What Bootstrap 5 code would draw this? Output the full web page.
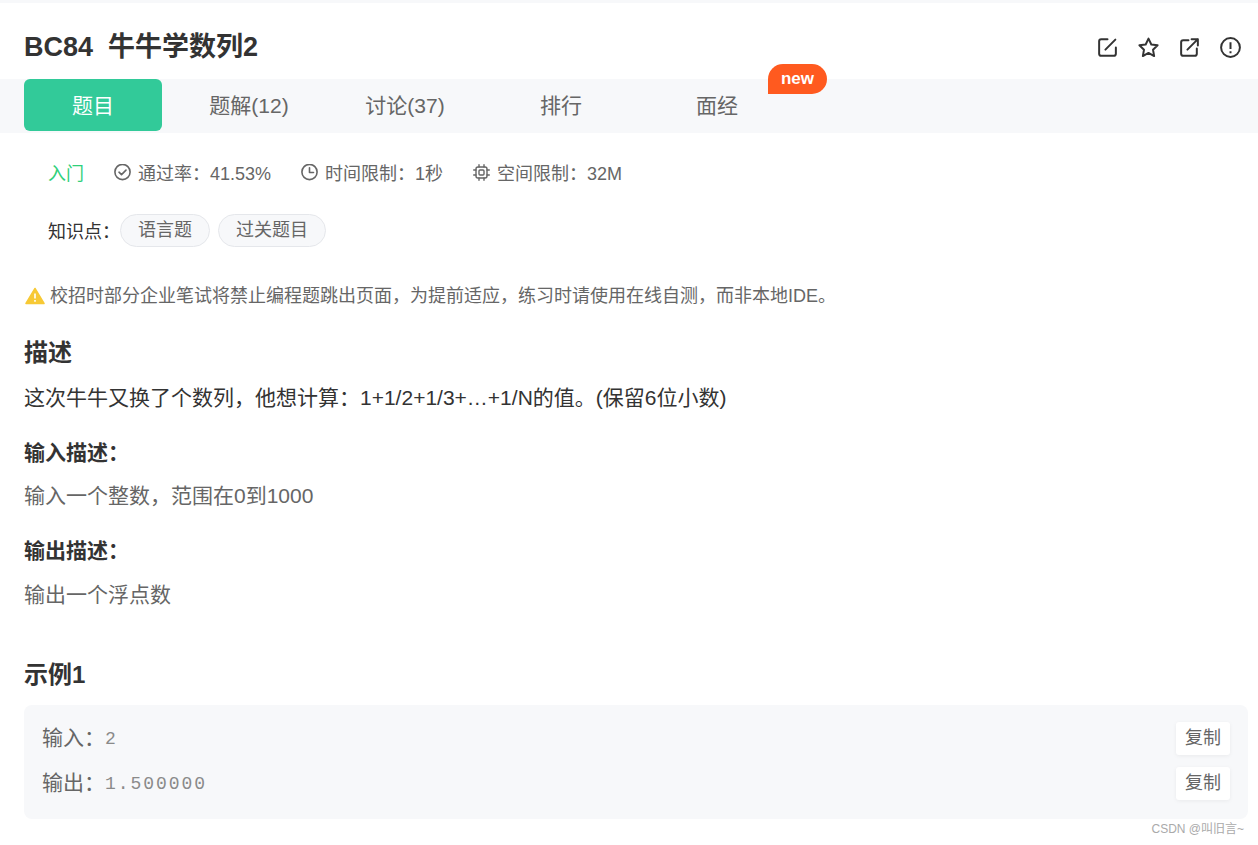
<!DOCTYPE html>
<html lang="zh">
<head>
<meta charset="utf-8">
<link rel="stylesheet" href="https://cdn.jsdelivr.net/npm/bootstrap@5.3.0/dist/css/bootstrap.min.css">
<style>
html,body{height:845px;overflow:hidden}
body{font-family:"Liberation Sans","Noto Sans CJK SC",sans-serif;color:#333;background:#fff;border-top:3px solid #f7f8fa}
.head-row{height:76px;padding:12px 16px 0 24px}
.q-title{font-size:27px;line-height:36px;font-weight:700;margin:0;white-space:pre;color:#333}
.tool-icons{gap:18px}
.tab-strip{height:54px;background:#f7f8fa;padding-left:24px;gap:18px;position:relative}
.tab-item{width:138px;height:52px;line-height:54px;text-align:center;font-size:21px;color:#666;border-radius:6px;position:relative}
.tab-on{background:#32ca99;color:#fff}
.new-flag{position:absolute;left:768px;top:-15px;width:59px;height:30px;background:#ff5a1f;color:#fff;font-size:17px;font-weight:700;line-height:30px;text-align:center;border-radius:16px 16px 16px 0}
.meta-row{height:24px;margin-top:29px;padding-left:48px;font-size:18px;line-height:24px;color:#666}
.lvl{color:#2fd07a;margin-right:30px}
.meta-item{margin-right:30px;gap:7px}
.meta-ico{margin-top:-3px}
.know-row{margin-top:28px;padding-left:48px;height:33px;font-size:18px;color:#333;gap:8px}
.chip{height:33px;line-height:30px;border:1px solid #e5e7eb;background:#f7f8fa;border-radius:17px;color:#666;padding:0 17px}
.know-label{margin-top:5px;margin-right:-8px;width:72px}
.warn-row{margin-top:37px;padding-left:25px;font-size:18px;line-height:24px;color:#666;gap:5px}
.sec-h{font-size:24px;line-height:32px;font-weight:700;color:#333;margin:0;padding-left:24px}
.sec-sub{font-size:21px;line-height:28px;font-weight:700;color:#333;margin:0;padding-left:24px}
.desc-text{font-size:21px;line-height:28px;padding-left:24px;margin:0}
.gray-t{color:#666}
.sec-gap-a{margin-top:29px}.gap-15{margin-top:15px}.gap-16{margin-top:16px}.sec-gap-b{margin-top:27px}.sec-gap-c{margin-top:27px}.sec-gap-d{margin-top:50px}
.sample{margin:14px 10px 0 24px;height:114px;background:#f7f8fa;border-radius:8px;padding:17px 18px 0;position:relative}
.sample-row{height:33px;margin-bottom:12px;font-size:21px;line-height:31px;color:#666}
.mono-v{font-family:"Liberation Mono",monospace;font-size:18px;letter-spacing:1.95px;color:#8a8a8a;position:relative;top:-1px}
.copy-b{width:54px;height:33px;background:#fff;border-radius:3px;font-size:18px;line-height:33px;text-align:center;color:#666;box-shadow:0 1px 4px rgba(0,0,0,.06)}
.wm{position:absolute;right:14px;top:820px;font-size:12px;line-height:18px;color:#aaa}
</style>
</head>
<body>
<div class="head-row d-flex justify-content-between align-items-center">
  <h1 class="q-title">BC84  牛牛学数列2</h1>
  <div class="tool-icons d-flex align-items-center">
    <svg width="23" height="23" viewBox="0 0 22 22" fill="none" stroke="#333" stroke-width="1.900" stroke-linecap="round" stroke-linejoin="round"><path d="M11 3H5a2 2 0 0 0-2 2v12a2 2 0 0 0 2 2h12a2 2 0 0 0 2-2v-6"/><path d="M9 13L18.500 3.500"/></svg>
    <svg width="23" height="23" viewBox="0 0 22 22" fill="none" stroke="#333" stroke-width="1.900" stroke-linejoin="round"><path d="M11 2.500l2.700 5.600 6 .8-4.400 4.200 1.100 6.100-5.400-3-5.400 3 1.100-6.100-4.400-4.200 6-.8z"/></svg>
    <svg width="23" height="23" viewBox="0 0 22 22" fill="none" stroke="#333" stroke-width="1.900" stroke-linecap="round" stroke-linejoin="round"><path d="M10 4H5a2 2 0 0 0-2 2v11a2 2 0 0 0 2 2h11a2 2 0 0 0 2-2v-5"/><path d="M9 13L19 3M13 3h6v6"/></svg>
    <svg width="23" height="23" viewBox="0 0 22 22" fill="none" stroke="#333" stroke-width="1.900"><circle cx="11" cy="11" r="9"/><path d="M11 6v6.500M11 14.500v2"/></svg>
  </div>
</div>
<div class="tab-strip d-flex">
  <div class="tab-item tab-on">题目</div>
  <div class="tab-item">题解(12)</div>
  <div class="tab-item">讨论(37)</div>
  <div class="tab-item">排行</div>
  <div class="tab-item">面经</div>
  <div class="new-flag">new</div>
</div>
<div class="meta-row d-flex align-items-center">
  <span class="lvl">入门</span>
  <span class="meta-item d-inline-flex align-items-center">
    <svg class="meta-ico" width="17" height="18" viewBox="0 0 17 18" fill="none" stroke="#666" stroke-width="1.600" stroke-linecap="round" stroke-linejoin="round"><circle cx="8.500" cy="8" r="7.600"/><path d="M5 8.200l2.500 2.400 4.500-4.500"/></svg>
    <span>通过率：41.53%</span></span>
  <span class="meta-item d-inline-flex align-items-center">
    <svg class="meta-ico" width="17" height="18" viewBox="0 0 17 18" fill="none" stroke="#666" stroke-width="1.600" stroke-linecap="round" stroke-linejoin="round"><circle cx="8.500" cy="8" r="7.600"/><path d="M8.500 3.800V8.500h4"/></svg>
    <span>时间限制：1秒</span></span>
  <span class="meta-item d-inline-flex align-items-center">
    <svg class="meta-ico" width="17" height="18" viewBox="0 0 17 18" fill="none" stroke="#666" stroke-width="1.400" stroke-linecap="round" stroke-linejoin="round"><rect x="3" y="3" width="11" height="11" rx="2"/><rect x="6" y="6" width="5" height="5" rx="1"/><path d="M6 .8V3M11 .8V3M6 14v2.200M11 14v2.200M.7 6H3M.7 11H3M14 6h2.300M14 11h2.300"/></svg>
    <span>空间限制：32M</span></span>
</div>
<div class="know-row d-flex">
  <span class="know-label">知识点：</span>
  <span class="chip">语言题</span>
  <span class="chip">过关题目</span>
</div>
<div class="warn-row d-flex align-items-center">
  <svg width="20" height="18" viewBox="0 0 20 18"><path d="M10 1.500L19 16.500H1z" fill="#f7c935" stroke="#f7c935" stroke-width="1.500" stroke-linejoin="round"/><path d="M10 6.500v5M10 13v1.700" stroke="#fff" stroke-width="1.600"/></svg>
  <span>校招时部分企业笔试将禁止编程题跳出页面，为提前适应，练习时请使用在线自测，而非本地IDE。</span>
</div>
<h2 class="sec-h sec-gap-a">描述</h2>
<p class="desc-text gap-15">这次牛牛又换了个数列，他想计算：1+1/2+1/3+…+1/N的值。(保留6位小数)</p>
<h3 class="sec-sub sec-gap-b">输入描述：</h3>
<p class="desc-text gray-t gap-15">输入一个整数，范围在0到1000</p>
<h3 class="sec-sub sec-gap-c">输出描述：</h3>
<p class="desc-text gray-t gap-16">输出一个浮点数</p>
<h2 class="sec-h sec-gap-d">示例1</h2>
<div class="sample">
  <div class="sample-row d-flex justify-content-between">
    <span>输入：<span class="mono-v">2</span></span><span class="copy-b">复制</span>
  </div>
  <div class="sample-row d-flex justify-content-between">
    <span>输出：<span class="mono-v">1.500000</span></span><span class="copy-b">复制</span>
  </div>
</div>
<div class="wm">CSDN @叫旧言~</div>
<script src="https://cdn.jsdelivr.net/npm/bootstrap@5.3.0/dist/js/bootstrap.bundle.min.js"></script>
</body>
</html>
